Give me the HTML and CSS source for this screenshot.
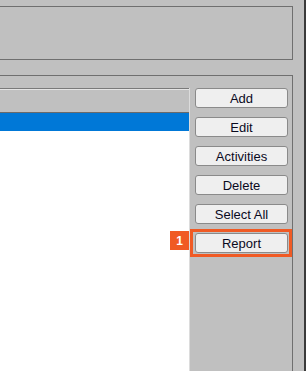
FILE: index.html
```html
<!DOCTYPE html>
<html lang="en">
<head>
  <meta charset="UTF-8">
  <title>Items</title>
  <link rel="stylesheet" href="styles.css">
</head>
<body>
  <div class="window">
    <div class="group top"></div>
    <div class="group main">
      <div class="list">
        <div class="list-header"></div>
        <div class="row selected"></div>
        <div class="list-body"></div>
      </div>
      <div class="actions">
        <button>Add</button>
        <button>Edit</button>
        <button>Activities</button>
        <button>Delete</button>
        <button>Select All</button>
        <div class="callout">
          <span class="badge">1</span>
          <button>Report</button>
        </div>
      </div>
    </div>
  </div>
  <div class="edge"></div>
</body>
</html>
```
FILE: styles.css
```css
body {
  margin: 0;
  width: 306px;
  height: 371px;
  overflow: hidden;
  display: flex;
  background: #c0c0c0;
  font-family: 'Liberation Sans', Arial, sans-serif;
}

.window {
  width: 304px;
  display: flex;
  flex-direction: column;
}

.edge {
  width: 2px;
  background: #3a3a3a;
}

.group {
  width: 292px;
  border-top: 1px solid #6f6f6f;
  border-right: 1px solid #6f6f6f;
}

.group.top {
  margin-top: 6px;
  height: 52px;
  border-bottom: 1px solid #6f6f6f;
}

.group.main {
  margin-top: 15px;
  flex: 1;
  display: flex;
  padding-top: 12px;
}

.list {
  width: 189px;
  border-right: 1px solid #dcdcdc;
  display: flex;
  flex-direction: column;
  background: #fff;
}

.list-header {
  height: 23px;
  background: #c0c0c0;
  border-top: 1px solid #7a7a7a;
  border-bottom: 1px solid #6a6a6a;
  box-shadow: inset 0 1px 0 #e4e4e4;
}

.row.selected {
  height: 18px;
  background: #0078d7;
}

.list-body {
  flex: 1;
}

.actions {
  margin-left: 5px;
  display: flex;
  flex-direction: column;
  gap: 9px;
}

.actions button {
  width: 93px;
  height: 20px;
  padding: 0;
  font-family: inherit;
  font-size: 13px;
  color: #0a0a1e;
  background: #efefef;
  border: 1px solid #8a8a8a;
  border-radius: 3px;
}

.callout {
  position: relative;
  display: flex;
}

.callout::before {
  content: '';
  position: absolute;
  top: -4px;
  left: -5px;
  right: -4px;
  bottom: -4px;
  border: 3px solid #f05a24;
}

.badge {
  position: absolute;
  top: -2px;
  left: -25px;
  width: 19px;
  height: 19px;
  background: #f05a24;
  color: #fff;
  font-size: 12px;
  font-weight: bold;
  display: flex;
  align-items: center;
  justify-content: center;
}
```
